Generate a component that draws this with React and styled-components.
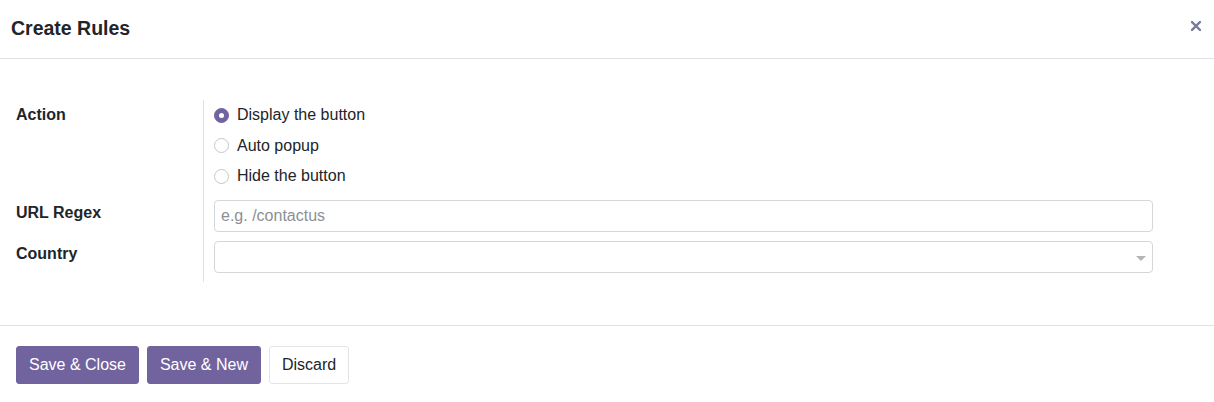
import React, { useState } from 'react';
import styled, { createGlobalStyle } from 'styled-components';

const GlobalStyle = createGlobalStyle`
    html, body {
        margin: 0;
        padding: 0;
        background: #fff;
    }
    body {
        font-family: 'Liberation Sans', Arial, Helvetica, sans-serif;
        font-size: 16px;
        color: #212529;
    }
`;

const Dialog = styled.div`
    width: 1214px;
    height: 402px;
    background: #fff;
    display: flex;
    flex-direction: column;
`;

const Header = styled.div`
    height: 58px;
    display: flex;
    align-items: center;
    justify-content: space-between;
    padding: 0 11px 0 11px;
    border-bottom: 1px solid #dee2e6;
    flex-shrink: 0;
`;

const Title = styled.h4`
    margin: 0;
    font-size: 19.5px;
    font-weight: 700;
    color: #212529;
    line-height: 1;
`;

const Close = styled.button`
    border: 0;
    background: none;
    padding: 0;
    width: 14px;
    height: 14px;
    display: flex;
    align-items: center;
    justify-content: center;
    cursor: pointer;
    margin-top: -6px;
`;

const Body = styled.div`
    padding: 41px 0 0 16px;
    height: 267px;
    border-bottom: 1px solid #dee2e6;
    box-sizing: border-box;
    flex-shrink: 0;
`;

const Group = styled.div`
    display: grid;
    grid-template-columns: 187px 1fr;
    margin-right: 61px;
`;

const Label = styled.div`
    font-weight: 700;
    color: #212529;
    line-height: 24px;
    padding-top: ${(p) => p.$top ?? 9}px;
`;

const Field = styled.div`
    border-left: 1px solid #dee2e6;
    padding: ${(p) => p.$top ?? 9}px 0 ${(p) => (p.$last ? '9px' : '0')} 10px;
`;

const RadioList = styled.div`
    display: flex;
    flex-direction: column;
`;

const RadioRow = styled.label`
    display: flex;
    align-items: center;
    gap: 8px;
    height: 30.5px;
    cursor: pointer;
    color: #212529;
`;

const RadioDot = styled.span`
    width: 15px;
    height: 15px;
    box-sizing: border-box;
    border-radius: 50%;
    flex-shrink: 0;
    background: ${(p) => (p.$checked ? '#71639e' : '#fff')};
    border: 1px solid ${(p) => (p.$checked ? '#71639e' : '#c4c8cc')};
    display: flex;
    align-items: center;
    justify-content: center;

    &::after {
        content: '';
        display: ${(p) => (p.$checked ? 'block' : 'none')};
        width: 5px;
        height: 5px;
        border-radius: 50%;
        background: #fff;
    }
`;

const Input = styled.input`
    width: 100%;
    height: 32px;
    box-sizing: border-box;
    border: 1px solid #d4d7da;
    border-radius: 4px;
    padding: 0 6px;
    font-family: inherit;
    font-size: 16px;
    color: #212529;
    outline: none;
    display: block;

    &::placeholder {
        color: #8c8f94;
    }
`;

const SelectBox = styled.div`
    position: relative;
    height: 32px;
    box-sizing: border-box;
    border: 1px solid #d4d7da;
    border-radius: 4px;
`;

const Caret = styled.span`
    position: absolute;
    right: 6px;
    top: 14px;
    width: 0;
    height: 0;
    border-left: 5px solid transparent;
    border-right: 5px solid transparent;
    border-top: 5px solid #b3b6b9;
`;

const Footer = styled.div`
    display: flex;
    gap: 8px;
    padding: 20px 16px 0;
`;

const Button = styled.button`
    height: 38px;
    box-sizing: border-box;
    padding: 0 12px;
    border-radius: 3px;
    font-family: inherit;
    font-size: 16px;
    cursor: pointer;
    background: ${(p) => (p.$primary ? '#71639e' : '#fff')};
    color: ${(p) => (p.$primary ? '#fff' : '#212529')};
    border: 1px solid ${(p) => (p.$primary ? '#71639e' : '#e2e4e7')};
`;

const options = ['Display the button', 'Auto popup', 'Hide the button'];

export default function App() {
    const [action, setAction] = useState(0);

    return (
        <>
            <GlobalStyle />
            <Dialog>
                <Header>
                    <Title>Create Rules</Title>
                    <Close aria-label='Close'>
                        <svg width='10' height='10' viewBox='0 0 10 10'>
                            <path
                                d='M1 1L9 9M9 1L1 9'
                                stroke='#787b99'
                                strokeWidth='2.4'
                                strokeLinecap='square'
                            />
                        </svg>
                    </Close>
                </Header>
                <Body>
                    <Group>
                        <Label $top={3}>Action</Label>
                        <Field $top={0}>
                            <RadioList>
                                {options.map((o, i) => (
                                    <RadioRow key={o} onClick={() => setAction(i)}>
                                        <RadioDot $checked={action === i} />
                                        {o}
                                    </RadioRow>
                                ))}
                            </RadioList>
                        </Field>
                        <Label $top={9.5}>URL Regex</Label>
                        <Field $top={8}>
                            <Input placeholder='e.g. /contactus' />
                        </Field>
                        <Label $top={10.5}>Country</Label>
                        <Field $top={9} $last>
                            <SelectBox>
                                <Caret />
                            </SelectBox>
                        </Field>
                    </Group>
                </Body>
                <Footer>
                    <Button $primary>Save &amp; Close</Button>
                    <Button $primary>Save &amp; New</Button>
                    <Button>Discard</Button>
                </Footer>
            </Dialog>
        </>
    );
}
